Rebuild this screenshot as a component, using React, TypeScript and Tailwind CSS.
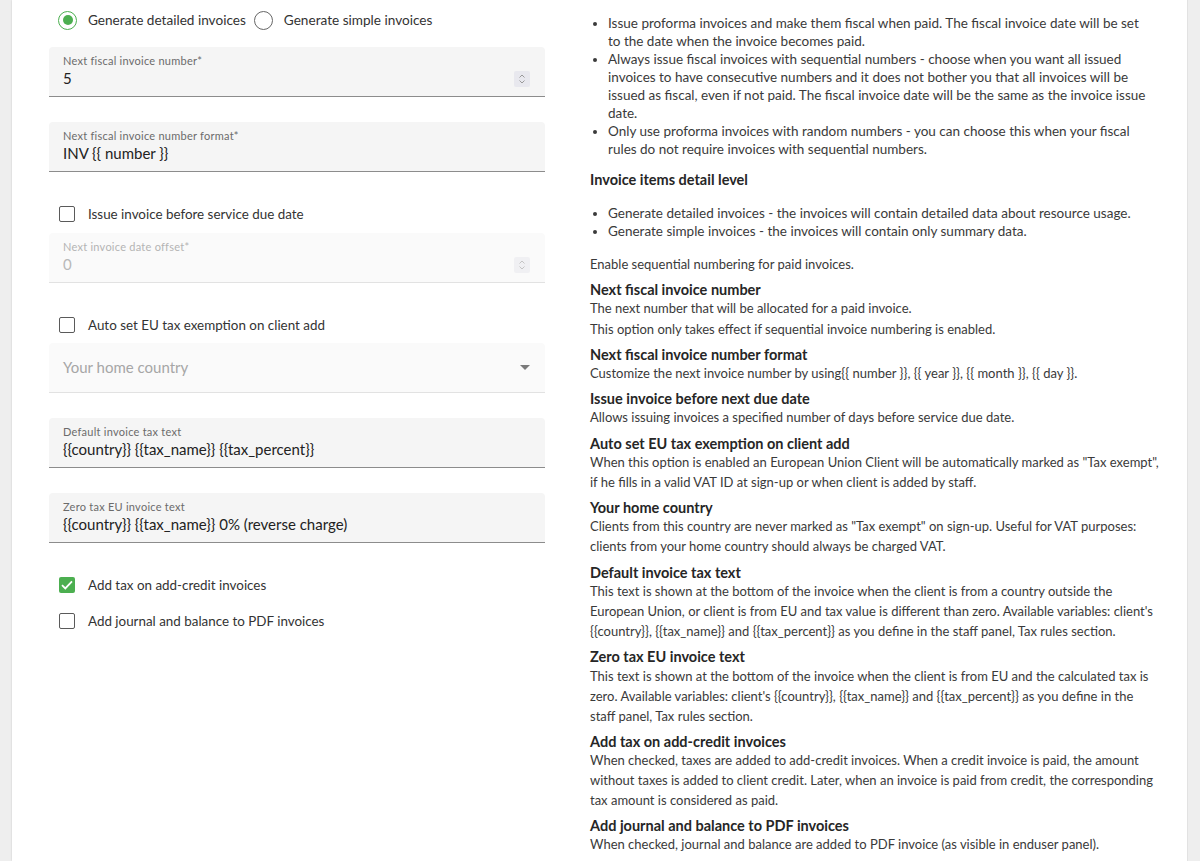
import React from "react";

const font = { fontFamily: "Lato, 'Open Sans', sans-serif" };

const Spinner = ({ faded }: { faded?: boolean }) => (
  <div
    className={`flex h-[16px] w-[16px] items-center justify-center rounded-[2px] ${
      faded ? "bg-[#f0f0f3]" : "bg-[#e8e8ee]"
    }`}
  >
    <svg width="8" height="12" viewBox="0 0 8 12" fill="none">
      <path d="M1.5 4.5 4 2l2.5 2.5" stroke={faded ? "#c4c4c4" : "#9a9a9a"} strokeWidth="1" />
      <path d="M1.5 7.5 4 10l2.5-2.5" stroke={faded ? "#c4c4c4" : "#9a9a9a"} strokeWidth="1" />
    </svg>
  </div>
);

type FieldProps = {
  label: string;
  value: string;
  spinner?: boolean;
  disabled?: boolean;
  className?: string;
};

const Field = ({ label, value, spinner, disabled, className }: FieldProps) => (
  <div
    className={`flex h-[50px] items-end rounded-t-[4px] border-b pl-[14px] pr-[15px] ${
      disabled ? "border-[#e2e2e2] bg-[#fafafa]" : "border-[#8c8c8c] bg-[#f5f5f5]"
    } ${className ?? ""}`}
  >
    <div className="flex-1 pb-[8px]">
      <div
        className={`text-[11px] leading-[13px] tracking-[0.25px] ${
          disabled ? "text-[#b4b4b4]" : "text-[#6b6b6b]"
        }`}
      >
        {label}
      </div>
      <div
        className={`mt-px text-[15px] leading-[20px] ${
          disabled ? "text-[#b8b8b8]" : "text-[#222]"
        }`}
      >
        {value}
      </div>
    </div>
    {spinner && (
      <div className="mb-[9px]">
        <Spinner faded={disabled} />
      </div>
    )}
  </div>
);

const Checkbox = ({ checked, label, className }: { checked?: boolean; label: string; className?: string }) => (
  <div className={`flex h-[20px] items-center pl-[10px] ${className ?? ""}`}>
    {checked ? (
      <div className="flex h-[16px] w-[16px] items-center justify-center rounded-[2px] bg-[#4caf50]">
        <svg width="12" height="10" viewBox="0 0 12 10" fill="none">
          <path d="M1 5.2 4.3 8.4 11 1.4" stroke="#fff" strokeWidth="1.8" />
        </svg>
      </div>
    ) : (
      <div className="h-[16px] w-[16px] rounded-[2px] border-[1.5px] border-[#5a5a5a] bg-white" />
    )}
    <span className="ml-[13px] text-[13.4px] text-[#333]">{label}</span>
  </div>
);

const Radio = ({ checked, label }: { checked?: boolean; label: string }) => (
  <div className="flex items-center">
    <div
      className={`flex h-[19px] w-[19px] items-center justify-center rounded-full border-[1.5px] ${
        checked ? "border-[#4caf50]" : "border-[#666]"
      }`}
    >
      {checked && <div className="h-[10px] w-[10px] rounded-full bg-[#4caf50]" />}
    </div>
    <span className="ml-[11px] text-[13.6px] text-[#333]">{label}</span>
  </div>
);

const Heading = ({ children, className }: { children: React.ReactNode; className?: string }) => (
  <h3 className={`text-[14.5px] font-bold leading-[16px] text-[#262626] ${className ?? "mt-2"}`}>
    {children}
  </h3>
);

const Desc = ({ children, className }: { children: React.ReactNode; className?: string }) => (
  <p className={`whitespace-nowrap text-[13px] leading-[20px] text-[#3a3a3a] ${className ?? ""}`}>
    {children}
  </p>
);

export default function App() {
  return (
    <div style={font} className="flex h-[861px] w-full overflow-hidden bg-[#eeeeee]">
      <div className="ml-[12px] flex w-[1175px] bg-white shadow-[0_0_2px_rgba(0,0,0,0.15)]">
        {/* form column */}
        <div className="ml-[37px] w-[496px] pt-[10px]">
          <div className="flex h-[20px] items-center pl-[9px]">
            <Radio checked label="Generate detailed invoices" />
            <div className="ml-[8px]">
              <Radio label="Generate simple invoices" />
            </div>
          </div>

          <Field className="mt-[17px]" label="Next fiscal invoice number*" value="5" spinner />
          <Field className="mt-[25px]" label="Next fiscal invoice number format*" value="INV {{ number }}" />

          <Checkbox className="mt-[32px]" label="Issue invoice before service due date" />
          <Field className="mt-[9px]" label="Next invoice date offset*" value="0" spinner disabled />

          <Checkbox className="mt-[32px]" label="Auto set EU tax exemption on client add" />
          <div className="mt-[8px] flex h-[50px] items-center rounded-t-[4px] border-b border-[#e2e2e2] bg-[#fafafa] pl-[14px] pr-[15px]">
            <span className="flex-1 text-[15px] text-[#a6a6a6]">Your home country</span>
            <svg width="10" height="5" viewBox="0 0 10 5">
              <path d="M0 0h10L5 5z" fill="#7a7a7a" />
            </svg>
          </div>

          <Field className="mt-[25px]" label="Default invoice tax text" value="{{country}} {{tax_name}} {{tax_percent}}" />
          <Field className="mt-[25px]" label="Zero tax EU invoice text" value="{{country}} {{tax_name}} 0% (reverse charge)" />

          <Checkbox checked className="mt-[32px]" label="Add tax on add-credit invoices" />
          <Checkbox className="mt-[16px]" label="Add journal and balance to PDF invoices" />
        </div>

        {/* help column */}
        <div className="ml-[45px] w-[580px] pt-[14px] text-[13.5px] text-[#3a3a3a]">
          <ul className="list-disc whitespace-nowrap pl-[18px] leading-[18px]">
            <li>
              Issue proforma invoices and make them fiscal when paid. The fiscal invoice date will be set
              <br />
              to the date when the invoice becomes paid.
            </li>
            <li>
              Always issue fiscal invoices with sequential numbers - choose when you want all issued
              <br />
              invoices to have consecutive numbers and it does not bother you that all invoices will be
              <br />
              issued as fiscal, even if not paid. The fiscal invoice date will be the same as the invoice issue
              <br />
              date.
            </li>
            <li>
              Only use proforma invoices with random numbers - you can choose this when your fiscal
              <br />
              rules do not require invoices with sequential numbers.
            </li>
          </ul>

          <Heading className="mt-[14px]">Invoice items detail level</Heading>
          <ul className="mt-[16px] list-disc whitespace-nowrap pl-[18px] leading-[18px]">
            <li>Generate detailed invoices - the invoices will contain detailed data about resource usage.</li>
            <li>Generate simple invoices - the invoices will contain only summary data.</li>
          </ul>

          <Desc className="mt-[14px]">Enable sequential numbering for paid invoices.</Desc>

          <Heading className="mt-[8px]">Next fiscal invoice number</Heading>
          <Desc>The next number that will be allocated for a paid invoice.</Desc>
          <Desc className="mt-px">This option only takes effect if sequential invoice numbering is enabled.</Desc>

          <Heading>Next fiscal invoice number format</Heading>
          <Desc>Customize the next invoice number by using{"{{ number }}, {{ year }}, {{ month }}, {{ day }}"}.</Desc>

          <Heading>Issue invoice before next due date</Heading>
          <Desc>Allows issuing invoices a specified number of days before service due date.</Desc>

          <Heading className="mt-[9px]">Auto set EU tax exemption on client add</Heading>
          <Desc className="leading-[19px]">
            When this option is enabled an European Union Client will be automatically marked as "Tax exempt",
            <br />
            if he fills in a valid VAT ID at sign-up or when client is added by staff.
          </Desc>

          <Heading>Your home country</Heading>
          <Desc>
            Clients from this country are never marked as "Tax exempt" on sign-up. Useful for VAT purposes:
            <br />
            clients from your home country should always be charged VAT.
          </Desc>

          <Heading className="mt-[9px]">Default invoice tax text</Heading>
          <Desc>
            This text is shown at the bottom of the invoice when the client is from a country outside the
            <br />
            European Union, or client is from EU and tax value is different than zero. Available variables: client's
            <br />
            {"{{country}}, {{tax_name}} and {{tax_percent}} as you define in the staff panel, Tax rules section."}
          </Desc>

          <Heading>Zero tax EU invoice text</Heading>
          <Desc className="mt-px">
            This text is shown at the bottom of the invoice when the client is from EU and the calculated tax is
            <br />
            {"zero. Available variables: client's {{country}}, {{tax_name}} and {{tax_percent}} as you define in the"}
            <br />
            staff panel, Tax rules section.
          </Desc>

          <Heading>Add tax on add-credit invoices</Heading>
          <Desc>
            When checked, taxes are added to add-credit invoices. When a credit invoice is paid, the amount
            <br />
            without taxes is added to client credit. Later, when an invoice is paid from credit, the corresponding
            <br />
            tax amount is considered as paid.
          </Desc>

          <Heading>Add journal and balance to PDF invoices</Heading>
          <Desc>When checked, journal and balance are added to PDF invoice (as visible in enduser panel).</Desc>
        </div>
      </div>
      <div className="flex-1 border-l border-[#e2e2e2] bg-[#eeeeee]" />
    </div>
  );
}
